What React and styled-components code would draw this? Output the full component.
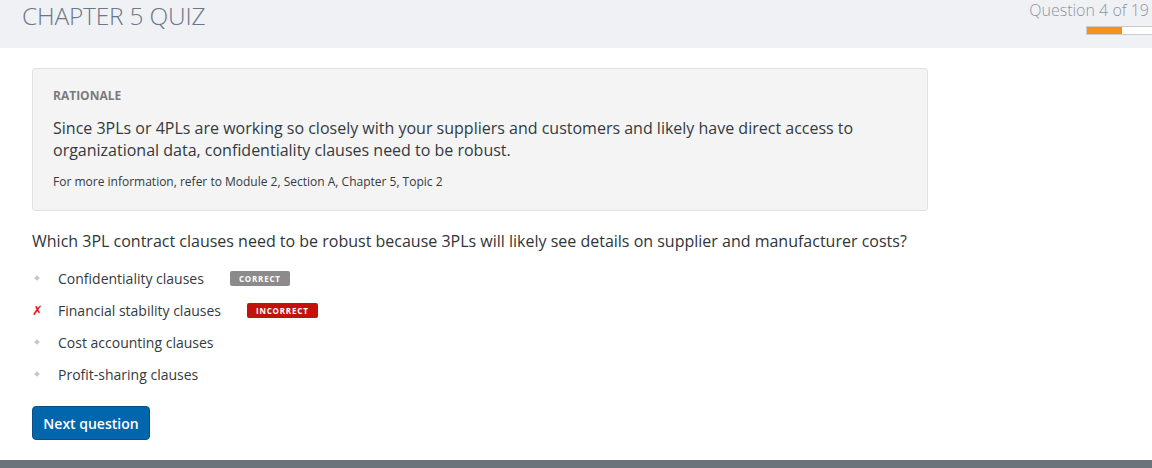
import React from 'react';
import styled, { createGlobalStyle } from 'styled-components';

const Global = createGlobalStyle`
  html, body {
    margin: 0;
    padding: 0;
    background: #ffffff;
    font-family: "Open Sans", "Noto Sans", sans-serif;
  }
  * { box-sizing: border-box; }
`;

const Page = styled.div`
  width: 1152px;
  height: 468px;
  display: flex;
  flex-direction: column;
  overflow: hidden;
`;

const Header = styled.header`
  height: 48px;
  background: #f0f1f5;
  display: flex;
  justify-content: space-between;
  align-items: flex-start;
  padding-left: 22px;
  flex-shrink: 0;
`;

const Title = styled.h1`
  margin: 0;
  font-size: 24.5px;
  font-weight: 300;
  color: #6a7787;
  line-height: 32px;
  letter-spacing: -0.2px;
`;

const Progress = styled.div`
  display: flex;
  flex-direction: column;
  align-items: flex-end;
`;

const Counter = styled.div`
  font-size: 16px;
  font-weight: 300;
  color: #8c95a1;
  line-height: 18px;
  padding-top: 1px;
  margin-right: 3px;
  white-space: nowrap;
`;

const Track = styled.div`
  margin-top: 7px;
  width: 66px;
  height: 9px;
  border: 1px solid #c9cacc;
  border-right: none;
  background: #ffffff;
`;

const Fill = styled.div`
  height: 100%;
  background: #f4901e;
`;

const Main = styled.main`
  flex: 1;
  padding: 20px 32px 0;
  display: flex;
  flex-direction: column;
`;

const Rationale = styled.section`
  width: 896px;
  background: #f4f4f4;
  border: 1px solid #e2e2e2;
  border-radius: 3px;
  padding: 19px 20px 20px;
`;

const Label = styled.div`
  font-size: 12px;
  font-weight: 700;
  color: #7b7b7b;
  line-height: 16px;
`;

const Body = styled.p`
  margin: 13px 0 0;
  font-size: 16px;
  line-height: 22px;
  color: #333a40;
`;

const Ref = styled.p`
  margin: 13px 0 0;
  font-size: 12px;
  line-height: 16px;
  color: #333a40;
`;

const Question = styled.p`
  margin: 19px 0 0;
  font-size: 16px;
  line-height: 22px;
  color: #2f3539;
`;

const Options = styled.ul`
  list-style: none;
  margin: 16px 0 0;
  padding: 0;
  display: flex;
  flex-direction: column;
  gap: 12px;
`;

const Option = styled.li`
  display: flex;
  align-items: center;
  height: 20px;
  font-size: 14px;
  color: #333a40;
`;

const Marker = styled.span`
  width: 26px;
  display: flex;
  align-items: center;
  padding-left: ${p => (p.$wrong ? '0' : '2px')};
`;

const Diamond = styled.span`
  width: 4px;
  height: 4px;
  margin-left: 1px;
  background: #c6c6c6;
  transform: rotate(45deg);
`;

const Cross = styled.span`
  color: #e8141a;
  font-size: 13px;
  font-weight: 700;
  font-family: "DejaVu Sans", sans-serif;
  font-style: italic;
  line-height: 1;
`;

const Badge = styled.span`
  margin-left: ${p => p.$gap}px;
  background: ${p => (p.$ok ? '#8b8b8b' : '#c3120b')};
  color: #ffffff;
  font-size: 8px;
  font-weight: 700;
  letter-spacing: 0.8px;
  line-height: 15px;
  height: 15px;
  padding: 0 9px;
  border-radius: 2px;
`;

const NextButton = styled.button`
  margin-top: 22px;
  align-self: flex-start;
  width: 118px;
  height: 34px;
  background: #0266ad;
  border: 1px solid #0a4f85;
  border-radius: 4px;
  color: #ffffff;
  font-family: "Open Sans", sans-serif;
  font-size: 14px;
  font-weight: 600;
  cursor: pointer;
`;

const Footer = styled.footer`
  height: 8px;
  background: #6b737b;
  flex-shrink: 0;
`;

const options = [
  { text: 'Confidentiality clauses', badge: 'CORRECT', ok: true, gap: 26 },
  { text: 'Financial stability clauses', badge: 'INCORRECT', ok: false, gap: 26, wrong: true },
  { text: 'Cost accounting clauses' },
  { text: 'Profit-sharing clauses' },
];

export default function App() {
  return (
    <Page>
      <Global />
      <Header>
        <Title>CHAPTER 5 QUIZ</Title>
        <Progress>
          <Counter>Question 4 of 19</Counter>
          <Track>
            <Fill style={{ width: `${(36 / 66) * 100}%` }} />
          </Track>
        </Progress>
      </Header>
      <Main>
        <Rationale>
          <Label>RATIONALE</Label>
          <Body>
            Since 3PLs or 4PLs are working so closely with your suppliers and customers and likely have direct access to
            organizational data, confidentiality clauses need to be robust.
          </Body>
          <Ref>For more information, refer to Module 2, Section A, Chapter 5, Topic 2</Ref>
        </Rationale>
        <Question>
          Which 3PL contract clauses need to be robust because 3PLs will likely see details on supplier and manufacturer costs?
        </Question>
        <Options>
          {options.map(o => (
            <Option key={o.text}>
              <Marker $wrong={o.wrong}>{o.wrong ? <Cross>✗</Cross> : <Diamond />}</Marker>
              {o.text}
              {o.badge && (
                <Badge $ok={o.ok} $gap={o.gap}>
                  {o.badge}
                </Badge>
              )}
            </Option>
          ))}
        </Options>
        <NextButton>Next question</NextButton>
      </Main>
      <Footer />
    </Page>
  );
}
